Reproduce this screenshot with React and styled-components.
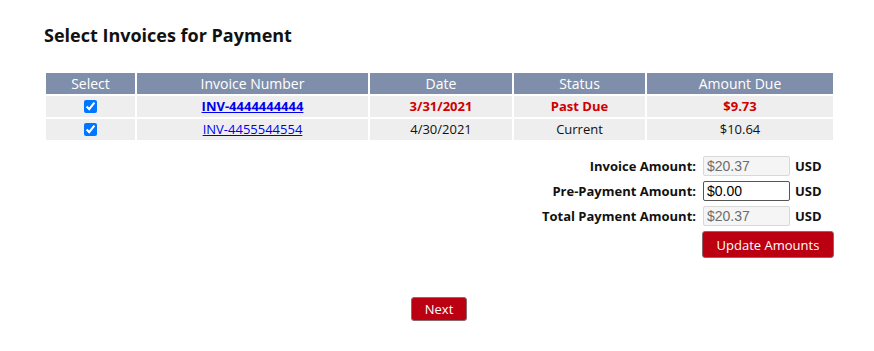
import React from 'react';
import styled, { createGlobalStyle } from 'styled-components';

const GlobalStyle = createGlobalStyle`
body {
  margin: 0;
  background: #ffffff;
  font-family: "Open Sans", "Liberation Sans", Arial, sans-serif;
  color: #111111;
}
`;

const Page = styled.div`
width: 790px;
padding: 23px 0 0 44px;
`;

const Title = styled.h2`
margin: 0 0 24px 0;
font-size: 18px;
font-weight: 700;
line-height: 24px;
color: #111111;
`;

const Table = styled.table`
width: 791px;
border-collapse: separate;
border-spacing: 2px;
table-layout: fixed;
`;

const HeadCell = styled.th`
background-color: #7f8fab;
color: #ffffff;
font-size: 14px;
font-weight: 400;
height: 21px;
padding: 0;
line-height: 21px;
text-align: center;
`;

const Cell = styled.td`
background-color: #eeeeee;
font-size: 13px;
height: 21px;
padding: 0;
line-height: 21px;
text-align: center;
color: ${(p) => (p.$late ? '#cc0000' : '#111111')};
font-weight: ${(p) => (p.$late ? 700 : 400)};
`;

const Check = styled.input`
margin: 0;
width: 13px;
height: 13px;
vertical-align: -2px;
`;

const InvoiceLink = styled.a`
color: #0000ee;
text-decoration: underline;
font-weight: ${(p) => (p.$bold ? 700 : 400)};
`;

const Form = styled.div`
display: grid;
grid-template-columns: auto 87px 44px;
justify-content: end;
row-gap: 5px;
margin-top: 14px;
align-items: center;
`;

const Label = styled.label`
font-size: 13px;
font-weight: 700;
text-align: right;
padding-right: 7px;
white-space: nowrap;
`;

const AmountInput = styled.input`
box-sizing: border-box;
width: 87px;
height: 20px;
margin: 0;
padding: 0 3px;
font-family: "Liberation Sans", Arial, sans-serif;
font-size: 14px;
border-radius: 2px;
border: 1px solid ${(p) => (p.disabled ? '#d8d8d8' : '#555555')};
background: ${(p) => (p.disabled ? '#f5f5f5' : '#ffffff')};
color: ${(p) => (p.disabled ? '#6d6d6d' : '#000000')};
`;

const Unit = styled.span`
font-size: 13px;
font-weight: 700;
padding-left: 5px;
`;

const RedButton = styled.button`
box-sizing: border-box;
width: ${(p) => p.$w}px;
height: ${(p) => p.$h}px;
padding: 0;
margin: 0;
font-family: "Open Sans", "Liberation Sans", Arial, sans-serif;
font-size: 13px;
white-space: nowrap;
color: #ffffff;
background: #bb0011;
border: 1px solid #8a6a6a;
border-radius: 3px;
cursor: pointer;
`;

const UpdateWrap = styled.div`
grid-column: 2 / span 2;
display: flex;
margin-left: -1px;
`;

const Footer = styled.div`
display: flex;
justify-content: center;
margin-top: 39px;
`;

const invoices = [
  { id: 'INV-4444444444', date: '3/31/2021', status: 'Past Due', amount: '$9.73', late: true },
  { id: 'INV-4455544554', date: '4/30/2021', status: 'Current', amount: '$10.64', late: false },
];

export default function App() {
  return (
    <Page>
      <GlobalStyle />
      <Title>Select Invoices for Payment</Title>
      <Table>
        <colgroup>
          <col style={{ width: 89 }} />
          <col style={{ width: 231 }} />
          <col style={{ width: 142 }} />
          <col style={{ width: 131 }} />
          <col style={{ width: 186 }} />
        </colgroup>
        <thead>
          <tr>
            <HeadCell>Select</HeadCell>
            <HeadCell>Invoice Number</HeadCell>
            <HeadCell>Date</HeadCell>
            <HeadCell>Status</HeadCell>
            <HeadCell>Amount Due</HeadCell>
          </tr>
        </thead>
        <tbody>
          {invoices.map((inv) => (
            <tr key={inv.id}>
              <Cell><Check type="checkbox" defaultChecked /></Cell>
              <Cell><InvoiceLink href="#" $bold={inv.late}>{inv.id}</InvoiceLink></Cell>
              <Cell $late={inv.late}>{inv.date}</Cell>
              <Cell $late={inv.late}>{inv.status}</Cell>
              <Cell $late={inv.late}>{inv.amount}</Cell>
            </tr>
          ))}
        </tbody>
      </Table>
      <Form>
        <Label>Invoice Amount:</Label>
        <AmountInput disabled defaultValue="$20.37" />
        <Unit>USD</Unit>
        <Label>Pre-Payment Amount:</Label>
        <AmountInput defaultValue="$0.00" />
        <Unit>USD</Unit>
        <Label>Total Payment Amount:</Label>
        <AmountInput disabled defaultValue="$20.37" />
        <Unit>USD</Unit>
        <UpdateWrap>
          <RedButton $w={132} $h={27}>Update Amounts</RedButton>
        </UpdateWrap>
      </Form>
      <Footer>
        <RedButton $w={56} $h={24}>Next</RedButton>
      </Footer>
    </Page>
  );
}
